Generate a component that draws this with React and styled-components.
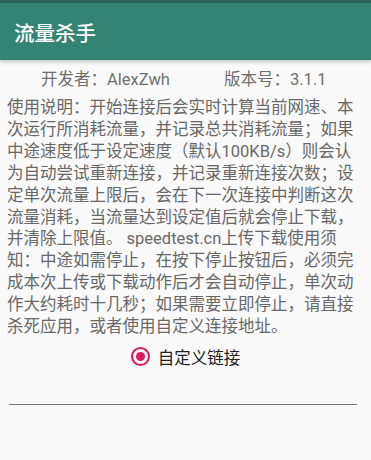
import React from 'react';
import styled, { createGlobalStyle } from 'styled-components';

const GlobalStyle = createGlobalStyle`
    html, body {
        margin: 0;
        padding: 0;
        background: #fafafa;
        font-family: Roboto, "Noto Sans CJK SC", sans-serif;
    }
`;

const Screen = styled.div`
    width: 371px;
    height: 460px;
    display: flex;
    flex-direction: column;
    background: #fafafa;
    overflow: hidden;
`;

const StatusStrip = styled.div`
    height: 3px;
    background: #2a6357;
`;

const AppBar = styled.div`
    height: 57px;
    display: flex;
    align-items: center;
    padding-left: 14px;
    background: #348474;
    box-shadow: 0 2px 4px rgba(0, 0, 0, 0.22);
    position: relative;
    z-index: 1;
`;

const Title = styled.h1`
    margin: 0;
    color: #ffffff;
    font-size: 20.5px;
    font-weight: 500;
    font-family: Roboto, "Noto Sans CJK SC", sans-serif;
`;

const InfoRow = styled.div`
    display: flex;
    padding: 10px 0 0 41px;
    height: 20px;
    line-height: 20px;
    font-size: 16.5px;
    color: #6e6e6e;
`;

const InfoItem = styled.span`
    width: ${(p) => p.$width}px;
    white-space: nowrap;
`;

const Description = styled.p`
    margin: 7px 0 0;
    padding-left: 7px;
    font-size: 16.5px;
    line-height: 21.9px;
    color: #686868;
    white-space: nowrap;
`;

const RadioRow = styled.label`
    margin-top: 3px;
    height: 32px;
    display: flex;
    align-items: center;
    justify-content: center;
    gap: 8px;
`;

const RadioOuter = styled.span`
    width: 15px;
    height: 15px;
    border: 2.5px solid #d81b60;
    border-radius: 50%;
    display: flex;
    align-items: center;
    justify-content: center;
`;

const RadioDot = styled.span`
    width: 9px;
    height: 9px;
    border-radius: 50%;
    background: #d81b60;
`;

const RadioLabel = styled.span`
    font-size: 16.5px;
    color: #212121;
`;

const Field = styled.div`
    margin: 31px 14px 0 9px;
    height: 0;
    border-bottom: 1.5px solid #7a7a7a;
`;

const lines = [
    '使用说明：开始连接后会实时计算当前网速、本',
    '次运行所消耗流量，并记录总共消耗流量；如果',
    '中途速度低于设定速度（默认100KB/s）则会认',
    '为自动尝试重新连接，并记录重新连接次数；设',
    '定单次流量上限后，会在下一次连接中判断这次',
    '流量消耗，当流量达到设定值后就会停止下载，',
    '并清除上限值。 speedtest.cn上传下载使用须',
    '知：中途如需停止，在按下停止按钮后，必须完',
    '成本次上传或下载动作后才会自动停止，单次动',
    '作大约耗时十几秒；如果需要立即停止，请直接',
    '杀死应用，或者使用自定义连接地址。',
];

const App = () => {
    return (
        <Screen>
            <GlobalStyle />
            <StatusStrip />
            <AppBar>
                <Title>流量杀手</Title>
            </AppBar>
            <InfoRow>
                <InfoItem $width={183}>开发者：AlexZwh</InfoItem>
                <InfoItem $width={120}>版本号：3.1.1</InfoItem>
            </InfoRow>
            <Description>
                {lines.map((l, i) => (
                    <React.Fragment key={i}>
                        {l}
                        {i < lines.length - 1 && <br />}
                    </React.Fragment>
                ))}
            </Description>
            <RadioRow>
                <RadioOuter>
                    <RadioDot />
                </RadioOuter>
                <RadioLabel>自定义链接</RadioLabel>
            </RadioRow>
            <Field />
        </Screen>
    );
};

export default App;
